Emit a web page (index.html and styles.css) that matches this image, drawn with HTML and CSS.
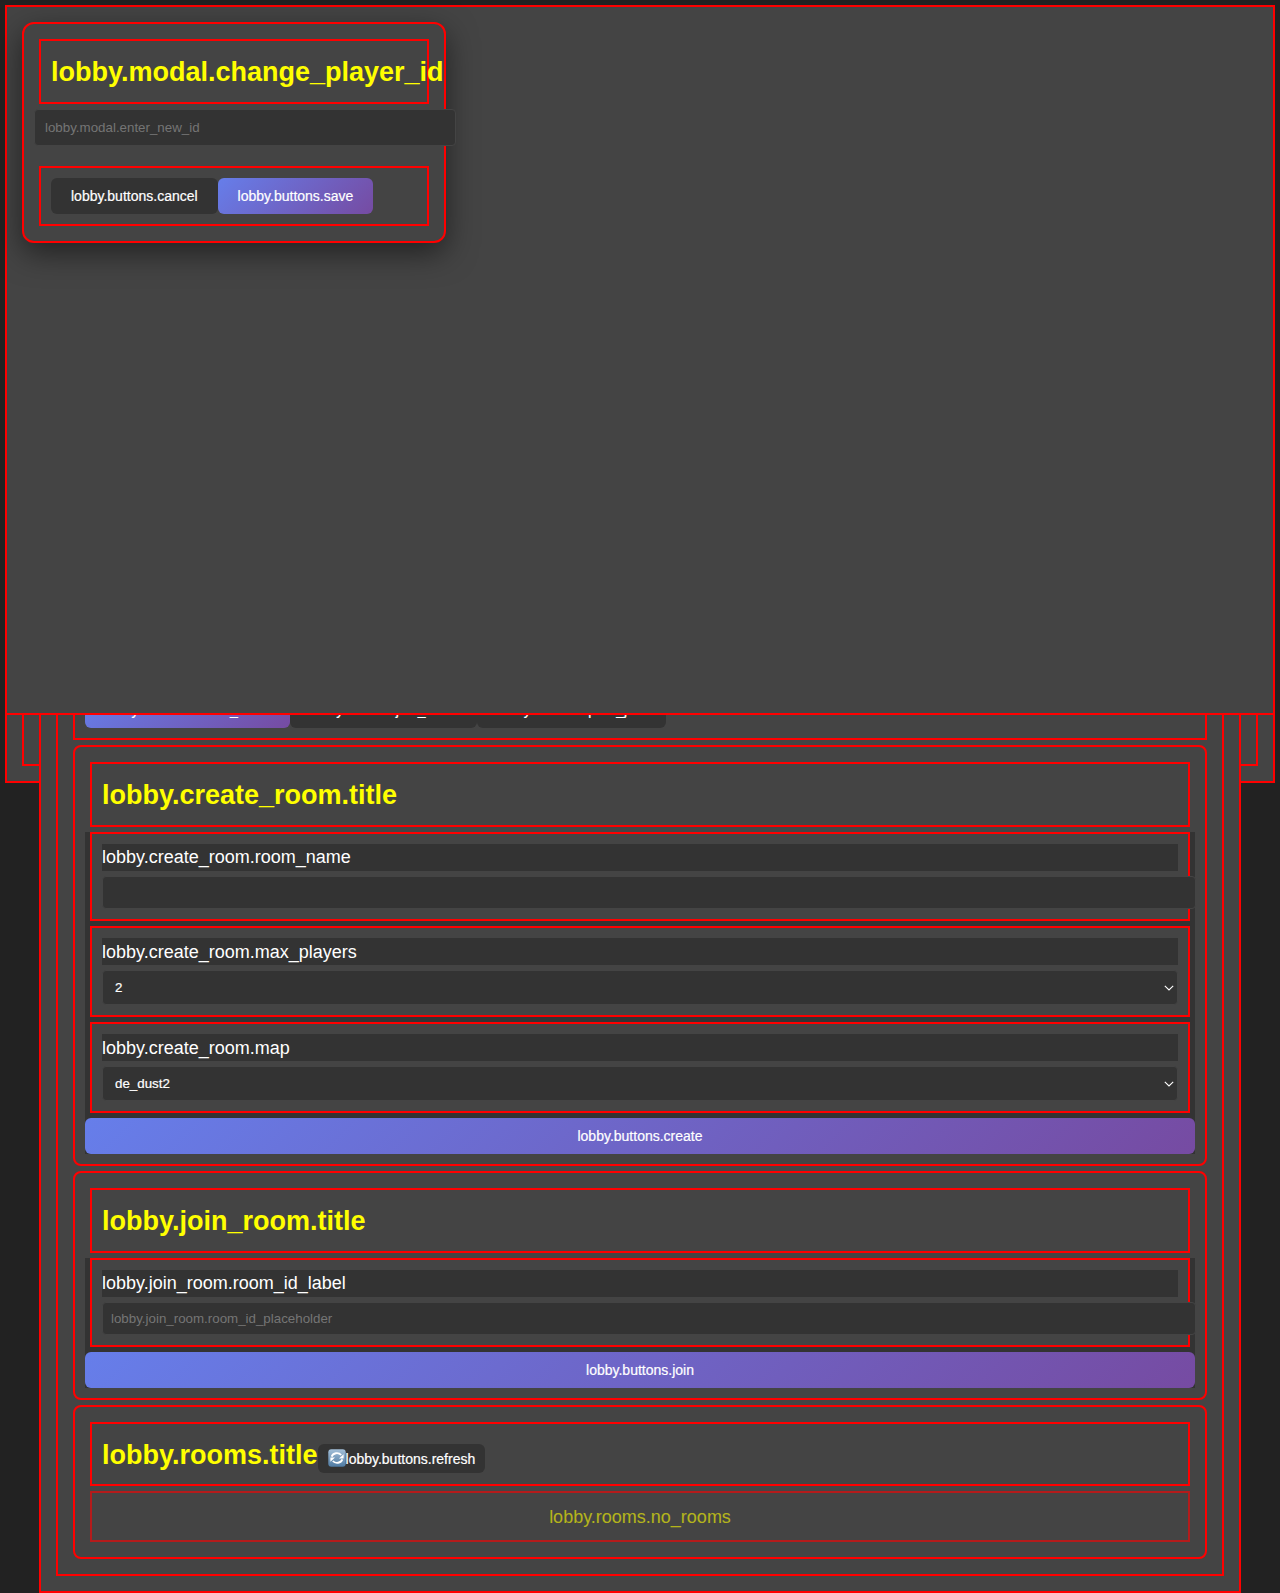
FILE: index.html
```html
<!DOCTYPE html>
<html lang="en">
<head>
<meta charset="utf-8">
<title>Lobby</title>
<link rel="stylesheet" href="styles.css">
</head>
<body>
<div class="box app">
  <div class="box screen">
    <div class="box container">
      <div class="box lobby">
        <div class="header"></div>
        <div class="box row tabs">
          <button class="btn primary">lobby.buttons.create_room</button>
          <button class="btn">lobby.buttons.join_room</button>
          <button class="btn">lobby.buttons.quick_join</button>
        </div>

        <div class="box card">
          <div class="box"><h2>lobby.create_room.title</h2></div>
          <form class="form">
            <div class="box">
              <label for="name">lobby.create_room.room_name</label>
              <input class="field" id="name" type="text">
            </div>
            <div class="box">
              <label class="picker-label" for="max">lobby.create_room.max_players</label>
              <div class="picker">
                <select class="select" id="max"><option>2</option></select>
                <svg class="chevron" viewBox="0 0 10 6" aria-hidden="true"><path d="M0.8 0.8L5 4.9L9.2 0.8"/></svg>
              </div>
            </div>
            <div class="box">
              <label class="picker-label" for="map">lobby.create_room.map</label>
              <div class="picker">
                <select class="select" id="map"><option>de_dust2</option></select>
                <svg class="chevron" viewBox="0 0 10 6" aria-hidden="true"><path d="M0.8 0.8L5 4.9L9.2 0.8"/></svg>
              </div>
            </div>
            <button class="btn primary wide" type="button">lobby.buttons.create</button>
          </form>
        </div>

        <div class="box card">
          <div class="box"><h2>lobby.join_room.title</h2></div>
          <form class="form">
            <div class="box">
              <label for="room">lobby.join_room.room_id_label</label>
              <input class="field" id="room" type="text" placeholder="lobby.join_room.room_id_placeholder">
            </div>
            <button class="btn primary wide" type="button">lobby.buttons.join</button>
          </form>
        </div>

        <div class="box card">
          <div class="box row rooms-head">
            <h2>lobby.rooms.title</h2>
            <button class="btn small"><svg class="icon" viewBox="0 0 18 18" aria-hidden="true">
                <defs>
                  <linearGradient id="tile" x1="0" y1="0" x2="0" y2="1">
                    <stop offset="0" stop-color="#a3bfd8"/>
                    <stop offset="1" stop-color="#4f7ba3"/>
                  </linearGradient>
                </defs>
                <rect x="0.3" y="0.3" width="17.4" height="17.4" rx="3" fill="url(#tile)"/>
                <path d="M3.6 7.6A5.6 5.1 0 0 1 13.2 6M14.4 10.4A5.6 5.1 0 0 1 4.8 12" fill="none" stroke="#fff" stroke-width="1.8"/>
                <path d="M15.6 5.2v4.2h-4.6zM2.4 12.8V8.6H7z" fill="#fff"/>
              </svg>lobby.buttons.refresh</button>
          </div>
          <div class="box empty">lobby.rooms.no_rooms</div>
        </div>
      </div>
    </div>
  </div>
</div>

<div class="box overlay">
  <div class="box modal">
    <div class="box"><h2>lobby.modal.change_player_id</h2></div>
    <input class="modal-field" type="text" placeholder="lobby.modal.enter_new_id">
    <div class="box row">
      <button class="btn">lobby.buttons.cancel</button>
      <button class="btn primary">lobby.buttons.save</button>
    </div>
  </div>
</div>
</body>
</html>
```

FILE: styles.css
```css
html {
  background: #222;
  overflow: hidden;
}

body {
  margin: 0;
  height: 1593px;
  overflow: hidden;
  display: flow-root;
  font-family: "Liberation Sans", Arial, sans-serif;
  font-size: 18px;
  line-height: 1.5;
  color: #fff;
}

.box {
  margin: 5px;
  padding: 10px;
  border: 2px solid red;
  background: #444;
  color: yellow;
}

/* The two outer frames are shorter than the lobby, which runs past them. */
.app {
  box-sizing: border-box;
  height: 778px;
}

.screen {
  box-sizing: border-box;
  height: 744px;
}

.header {
  height: 607px;
}

h2 {
  margin: 0;
  height: 40.5px;
  font-size: 27px;
  line-height: 42.5px;
  font-weight: bold;
  white-space: nowrap;
}

.row {
  display: flex;
}

.card {
  border-radius: 8px;
}

.form {
  margin: 0;
  background: #333;
  color: #fff;
}

label {
  display: block;
  height: 27px;
  margin-bottom: 5px;
  background: #333;
  color: #fff;
}

.picker-label {
  line-height: 28px;
}

input,
select {
  display: block;
  border: 1px solid #444;
  border-radius: 4px;
  background: #333;
  color: #fff;
  font-family: inherit;
  font-size: 13.333px;
}

select {
  -webkit-text-stroke: 0.2px #fff;
}

input::placeholder {
  color: #757575;
}

.field {
  width: 100%;
  height: 15.5px;
  padding: 8px;
}

.picker {
  position: relative;
}

.select {
  appearance: none;
  box-sizing: border-box;
  width: 100%;
  height: 35px;
  padding: 8px 12px;
}

.chevron {
  position: absolute;
  top: 14.5px;
  right: 4px;
  width: 10px;
  height: 6px;
  fill: none;
  stroke: #fff;
  stroke-width: 1.1;
  pointer-events: none;
}

.btn {
  height: 36px;
  padding: 0 20px;
  border: 0;
  border-radius: 6px;
  background: #333;
  color: #fff;
  font-family: inherit;
  font-size: 14px;
  line-height: 16px;
  white-space: nowrap;
  -webkit-text-stroke: 0.2px #fff;
}

.primary {
  background: linear-gradient(135deg, #667eea 0%, #764ba2 100%);
}

.wide {
  display: block;
  width: 100%;
}

.rooms-head {
  height: 40px;
  align-items: flex-start;
}

.small {
  height: 28.5px;
  margin-top: 10px;
  padding: 0 10px;
}

.icon {
  width: 18px;
  height: 18px;
  vertical-align: -3.5px;
}

.empty {
  height: 27px;
  line-height: 28px;
  opacity: 0.6;
  text-align: center;
}

.overlay {
  position: absolute;
  top: 0;
  left: 0;
  right: 0;
  box-sizing: border-box;
  height: 710px;
}

.modal {
  width: 400px;
  border-radius: 12px;
  box-shadow: 0 10px 30px rgba(0, 0, 0, 0.5);
}

.modal-field {
  width: 100%;
  height: 15.5px;
  margin-bottom: 20px;
  padding: 10px;
}
```
